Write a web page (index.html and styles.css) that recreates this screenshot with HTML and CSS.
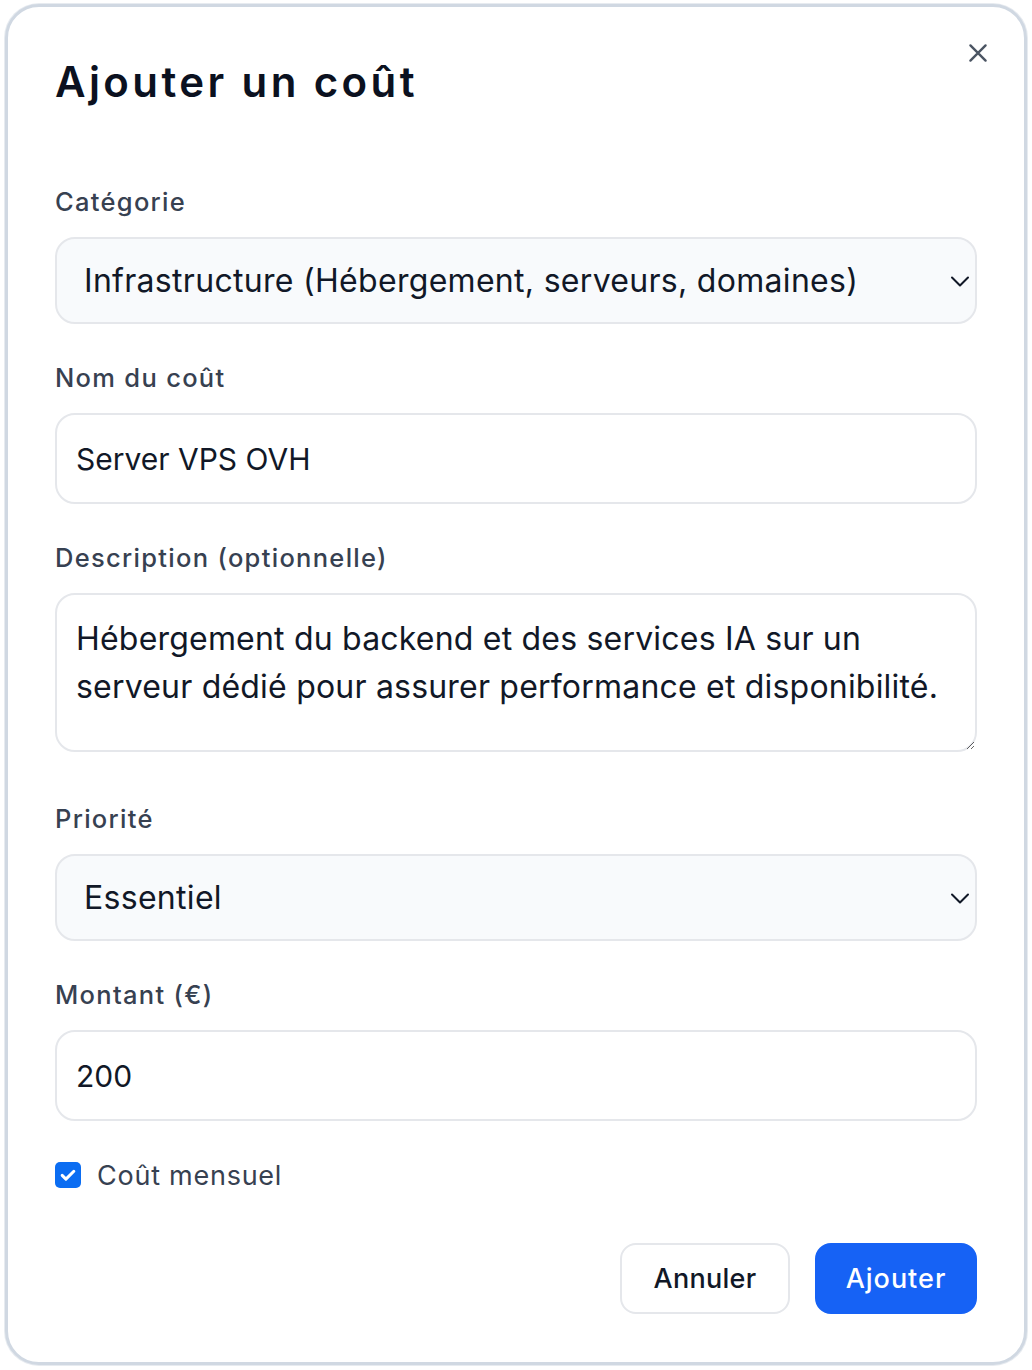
FILE: index.html
```html
<!DOCTYPE html>
<html lang="fr">
<head>
<meta charset="utf-8">
<title>Ajouter un coût</title>
<link rel="stylesheet" href="styles.css">
</head>
<body>
<div class="dialog">
  <button class="close" type="button" aria-label="Fermer">
    <svg viewBox="0 0 24 24" width="26" height="26"><path d="M5 5L19 19M19 5L5 19" stroke="#4b5563" stroke-width="2.2" stroke-linecap="round" fill="none"/></svg>
  </button>
  <h1 class="title">Ajouter un coût</h1>

  <div class="field">
    <label class="label">Catégorie</label>
    <div class="select-wrap">
      <select class="select">
        <option>Infrastructure (Hébergement, serveurs, domaines)</option>
      </select>
      <svg class="chevron" viewBox="0 0 24 24" width="24" height="24"><path d="M4 8.5l8 8 8-8" stroke="#111827" stroke-width="2" fill="none" stroke-linecap="round" stroke-linejoin="round"/></svg>
    </div>
  </div>

  <div class="field">
    <label class="label">Nom du coût</label>
    <input class="input" type="text" value="Server VPS OVH">
  </div>

  <div class="field field-area">
    <label class="label">Description (optionnelle)</label>
    <textarea class="textarea" rows="2">Hébergement du backend et des services IA sur un serveur dédié pour assurer performance et disponibilité.</textarea>
  </div>

  <div class="field">
    <label class="label">Priorité</label>
    <div class="select-wrap">
      <select class="select">
        <option>Essentiel</option>
      </select>
      <svg class="chevron" viewBox="0 0 24 24" width="24" height="24"><path d="M4 8.5l8 8 8-8" stroke="#111827" stroke-width="2" fill="none" stroke-linecap="round" stroke-linejoin="round"/></svg>
    </div>
  </div>

  <div class="field">
    <label class="label">Montant (€)</label>
    <input class="input" type="text" value="200">
  </div>

  <label class="check-row">
    <span class="checkbox">
      <svg viewBox="0 0 24 24" width="20" height="20"><path d="M5 12.5l4.5 4.5L19 7.5" stroke="#fff" stroke-width="3.6" fill="none" stroke-linecap="round" stroke-linejoin="round"/></svg>
    </span>
    <span class="check-label">Coût mensuel</span>
  </label>

  <div class="actions">
    <button class="btn btn-secondary" type="button">Annuler</button>
    <button class="btn btn-primary" type="button">Ajouter</button>
  </div>
</div>
</body>
</html>
```
FILE: styles.css
```css
* { box-sizing: border-box; }
html, body { margin: 0; padding: 0; background: #ffffff; }
body {
  font-family: Inter, "Noto Sans", "Liberation Sans", sans-serif;
  color: #111827;
  width: 1032px;
  height: 1370px;
  padding: 4px 5px;
}
.dialog {
  position: relative;
  width: 1022px;
  height: 1361px;
  border: 3px solid #d0d8e2;
  border-radius: 34px;
  box-shadow: 0 0 0 1px #e7ebf0;
  background: #fff;
  padding: 51px 47px 46px 47px;
  display: flex;
  flex-direction: column;
}
.close {
  position: absolute;
  top: 33px;
  right: 33px;
  background: none;
  border: none;
  padding: 0;
  width: 26px;
  height: 26px;
  cursor: pointer;
}
.close svg { display: block; }
.title {
  margin: 0 0 79px 0;
  font-size: 42px;
  line-height: 48px;
  font-weight: 600;
  color: #0b1120;
  letter-spacing: 3.4px;
}
.field {
  display: flex;
  flex-direction: column;
  margin-bottom: 37px;
}
.field-area { margin-bottom: 50px; }
.label {
  font-size: 25.5px;
  line-height: 34px;
  font-weight: 500;
  color: #374151;
  margin-bottom: 18px;
  letter-spacing: 1.3px;
}
.select-wrap { position: relative; }
.select {
  appearance: none;
  -webkit-appearance: none;
  width: 100%;
  height: 87px;
  border: 2px solid #e5e7eb;
  border-radius: 20px;
  background: #f8fafc;
  font-family: inherit;
  font-size: 32px;
  letter-spacing: 0.3px;
  color: #111827;
  padding: 0 60px 0 27px;
  outline: none;
}
.chevron {
  position: absolute;
  right: 5px;
  top: 50%;
  transform: translateY(-50%);
  pointer-events: none;
  display: block;
}
.input {
  width: 100%;
  height: 91px;
  border: 2px solid #e5e7eb;
  border-radius: 20px;
  background: #fff;
  font-family: inherit;
  font-size: 30px;
  color: #111827;
  padding: 0 19px;
  outline: none;
}
.textarea {
  display: block;
  width: 100%;
  height: 159px;
  border: 2px solid #e5e7eb;
  border-radius: 20px;
  background: #fff;
  font-family: inherit;
  font-size: 32px;
  line-height: 48px;
  letter-spacing: 0.2px;
  color: #111827;
  padding: 20px 19px;
  outline: none;
  resize: vertical;
}
.check-row {
  display: flex;
  align-items: center;
  gap: 16px;
  height: 34px;
  margin-bottom: 51px;
}
.checkbox {
  width: 26px;
  height: 26px;
  border-radius: 5px;
  background: #0b6df2;
  display: flex;
  align-items: center;
  justify-content: center;
}
.checkbox svg { display: block; }
.check-label {
  font-size: 27px;
  color: #374151;
  letter-spacing: 0.75px;
}
.actions {
  display: flex;
  justify-content: flex-end;
  gap: 25px;
}
.btn {
  height: 71px;
  border-radius: 16px;
  font-family: inherit;
  font-size: 27px;
  font-weight: 500;
  padding: 0 20px;
  cursor: pointer;
}
.btn-secondary {
  width: 170px;
  background: #fff;
  border: 2px solid #e5e7eb;
  color: #111827;
  letter-spacing: 0.3px;
}
.btn-primary {
  width: 162px;
  background: #1662f5;
  border: 2px solid #1662f5;
  color: #fff;
  letter-spacing: 1px;
}
```
